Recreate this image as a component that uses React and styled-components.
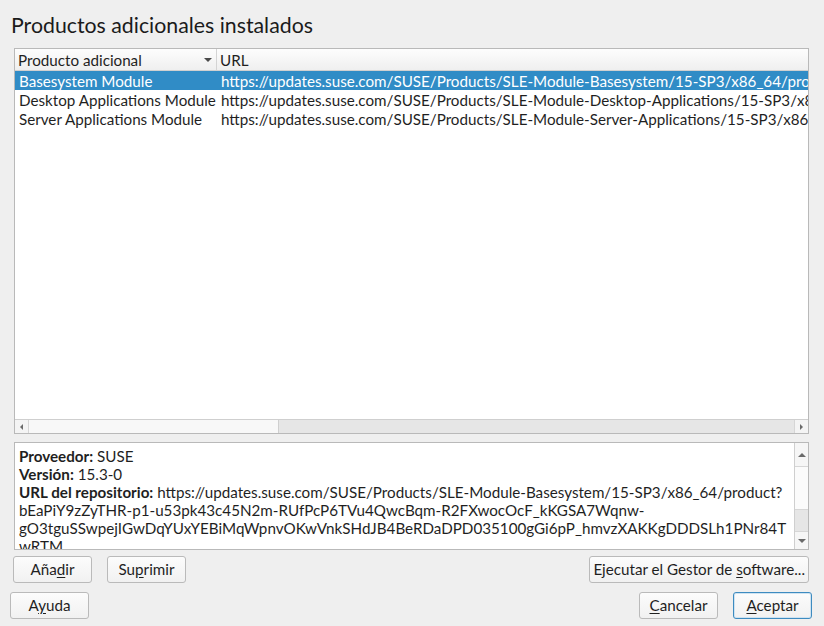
import React from "react";
import styled, { createGlobalStyle } from "styled-components";

const Global = createGlobalStyle`
  html, body { margin: 0; padding: 0; background: #efefef; }
  body { font-family: Lato, "Noto Sans", sans-serif; color: #1f1f1f; }
  * { box-sizing: border-box; }
`;

const Page = styled.div`
  width: 824px;
  height: 626px;
  display: flex;
  flex-direction: column;
  padding: 12px 15px 0 14px;
  overflow: hidden;
`;

const Title = styled.h1`
  margin: 0 0 0 -3px;
  font-size: 21.3px;
  font-weight: 400;
  line-height: 26px;
  height: 36px;
  color: #1b1b1b;
`;

const TablePanel = styled.div`
  height: 386px;
  border: 1px solid #b9b9b9;
  background: #fff;
  display: flex;
  flex-direction: column;
  overflow: hidden;
`;

const Header = styled.div`
  display: flex;
  height: 22px;
  flex-shrink: 0;
  background: linear-gradient(#fdfdfd, #efefef);
  border-bottom: 1px solid #d0d0d0;
  font-size: 15.2px;
  line-height: 22px;
`;

const HeaderCell = styled.div`
  position: relative;
  width: ${(p) => (p.$w ? `${p.$w}px` : "auto")};
  flex: ${(p) => (p.$w ? "none" : "1")};
  padding-left: ${(p) => p.$pad}px;
  border-right: ${(p) => (p.$w ? "1px solid #d4d4d4" : "none")};
  white-space: nowrap;
`;

const SortArrow = styled.span`
  position: absolute;
  right: 4px;
  top: 9px;
  width: 0;
  height: 0;
  border-left: 4px solid transparent;
  border-right: 4px solid transparent;
  border-top: 4px solid #4a4a4a;
`;

const Rows = styled.div`
  flex: 1;
  overflow: hidden;
`;

const Row = styled.div`
  display: flex;
  height: 19px;
  line-height: 20px;
  font-size: 15.2px;
  white-space: nowrap;
  background: ${(p) => (p.$sel ? "#308cc6" : "transparent")};
  color: ${(p) => (p.$sel ? "#fff" : "#1f1f1f")};
`;

const Cell = styled.div`
  width: ${(p) => (p.$w ? `${p.$w}px` : "auto")};
  flex: ${(p) => (p.$w ? "none" : "1")};
  padding-left: ${(p) => p.$pad}px;
  overflow: hidden;
`;

const HScroll = styled.div`
  height: 14px;
  flex-shrink: 0;
  border-top: 1px solid #cfcfcf;
  display: flex;
  background: #e6e6e6;
`;

const ArrowBtn = styled.div`
  width: 14px;
  flex-shrink: 0;
  display: flex;
  align-items: center;
  justify-content: center;
  background: #f4f4f4;
  border-${(p) => p.$side}: 1px solid #d6d6d6;
`;

const TriLeft = styled.span`
  width: 0; height: 0;
  border-top: 3px solid transparent;
  border-bottom: 3px solid transparent;
  border-right: 3px solid #6a6a6a;
`;
const TriRight = styled.span`
  width: 0; height: 0;
  border-top: 3px solid transparent;
  border-bottom: 3px solid transparent;
  border-left: 3px solid #6a6a6a;
`;
const TriUp = styled.span`
  width: 0; height: 0;
  border-left: 4px solid transparent;
  border-right: 4px solid transparent;
  border-bottom: 4px solid #6a6a6a;
`;
const TriDown = styled.span`
  width: 0; height: 0;
  border-left: 4px solid transparent;
  border-right: 4px solid transparent;
  border-top: 4px solid #6a6a6a;
`;

const HThumb = styled.div`
  width: 250px;
  background: #f8f8f8;
  border-right: 1px solid #cfcfcf;
`;
const Track = styled.div`
  flex: 1;
`;

const InfoPanel = styled.div`
  margin-top: 8px;
  height: 108px;
  border: 1px solid #b9b9b9;
  background: #fff;
  display: flex;
  overflow: hidden;
`;

const InfoText = styled.div`
  flex: 1;
  padding: 4px 0 0 4px;
  font-size: 15.2px;
  line-height: 18px;
  overflow: hidden;
  white-space: nowrap;
  b { font-weight: 700; }
`;

const VScroll = styled.div`
  width: 14px;
  flex-shrink: 0;
  border-left: 1px solid #cfcfcf;
  display: flex;
  flex-direction: column;
  background: #e6e6e6;
`;
const VArrow = styled.div`
  height: 24px;
  flex-shrink: 0;
  display: flex;
  align-items: center;
  justify-content: center;
  background: #f6f6f6;
  border-${(p) => p.$side}: 1px solid #d6d6d6;
`;
const VThumb = styled.div`
  height: 43px;
  background: #fbfbfb;
  border-bottom: 1px solid #d6d6d6;
`;
const VDown = styled(VArrow)`
  height: 18px;
`;

const ButtonRow = styled.div`
  display: flex;
  align-items: center;
  gap: ${(p) => p.$gap || 15}px;
  margin: ${(p) => p.$m};
`;

const Spacer = styled.div`
  flex: 1;
`;

const Button = styled.button`
  height: 27px;
  min-width: 79px;
  padding: 0 ${(p) => (p.$tight ? 3 : 5)}px 2px;
  font-family: Lato, "Noto Sans", sans-serif;
  font-size: 15.2px;
  color: #1f1f1f;
  border: 1px solid ${(p) => (p.$def ? "#3d8bc0" : "#bababa")};
  border-radius: 3px;
  background: linear-gradient(#fcfcfc, #f1f1f1);
  box-shadow: ${(p) => (p.$def ? "inset 0 0 0 1px #cfe3f1" : "none")};
  u { text-decoration-thickness: 1px; text-underline-offset: 2px; }
`;

const rows = [
  ["Basesystem Module", "https://updates.suse.com/SUSE/Products/SLE-Module-Basesystem/15-SP3/x86_64/product/"],
  ["Desktop Applications Module", "https://updates.suse.com/SUSE/Products/SLE-Module-Desktop-Applications/15-SP3/x86_64/product/"],
  ["Server Applications Module", "https://updates.suse.com/SUSE/Products/SLE-Module-Server-Applications/15-SP3/x86_64/product/"],
];

export default function App() {
  return (
    <>
      <Global />
      <Page>
        <Title>Productos adicionales instalados</Title>
        <TablePanel>
          <Header>
            <HeaderCell $w={202} $pad={3}>
              Producto adicional
              <SortArrow />
            </HeaderCell>
            <HeaderCell $pad={3}>URL</HeaderCell>
          </Header>
          <Rows>
            {rows.map(([name, url], i) => (
              <Row key={name} $sel={i === 0}>
                <Cell $w={202} $pad={4}>{name}</Cell>
                <Cell $pad={4}>{url}</Cell>
              </Row>
            ))}
          </Rows>
          <HScroll>
            <ArrowBtn $side="right"><TriLeft /></ArrowBtn>
            <HThumb />
            <Track />
            <ArrowBtn $side="left"><TriRight /></ArrowBtn>
          </HScroll>
        </TablePanel>
        <InfoPanel>
          <InfoText>
            <div><b>Proveedor:</b> SUSE</div>
            <div><b>Versión:</b> 15.3-0</div>
            <div>
              <b>URL del repositorio:</b> https://updates.suse.com/SUSE/Products/SLE-Module-Basesystem/15-SP3/x86_64/product?
            </div>
            <div>bEaPiY9zZyTHR-p1-u53pk43c45N2m-RUfPcP6TVu4QwcBqm-R2FXwocOcF_kKGSA7Wqnw-</div>
            <div>gO3tguSSwpejIGwDqYUxYEBiMqWpnvOKwVnkSHdJB4BeRDaDPD035100gGi6pP_hmvzXAKKgDDDSLh1PNr84T</div>
            <div>wRTM</div>
          </InfoText>
          <VScroll>
            <VArrow $side="bottom"><TriUp /></VArrow>
            <VThumb />
            <Track />
            <VDown $side="top"><TriDown /></VDown>
          </VScroll>
        </InfoPanel>
        <ButtonRow $m="6px 0 0 -1px">
          <Button>Aña<u>d</u>ir</Button>
          <Button>Su<u>p</u>rimir</Button>
          <Spacer />
          <Button $tight>Ejecutar el Gestor de <u>s</u>oftware...</Button>
        </ButtonRow>
        <ButtonRow $m="9px -3px 0 -4px">
          <Button>A<u>y</u>uda</Button>
          <Spacer />
          <Button>
            <u>C</u>ancelar
          </Button>
          <Button $def>
            <u>A</u>ceptar
          </Button>
        </ButtonRow>
      </Page>
    </>
  );
}
